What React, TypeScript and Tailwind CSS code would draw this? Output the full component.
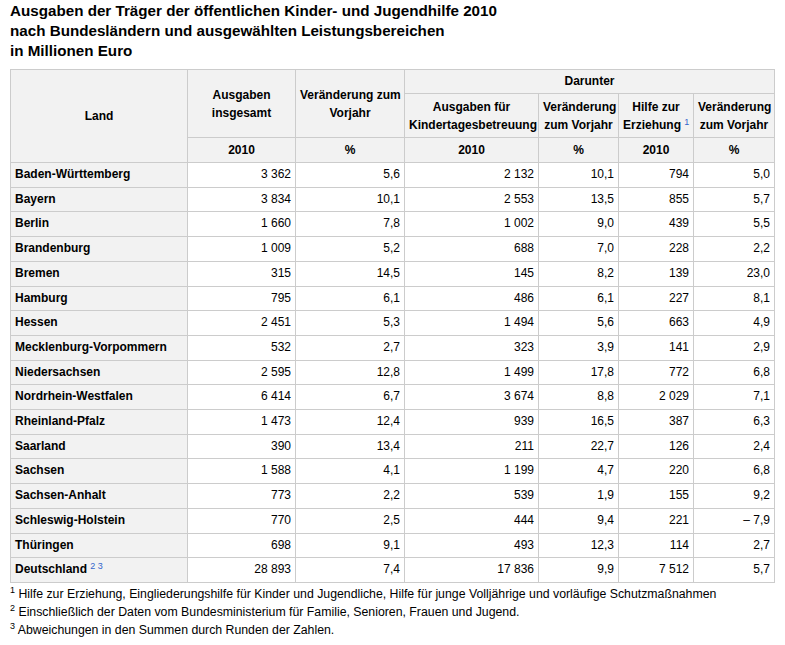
const rows: [string, string, string, string, string, string, string][] = [
  ["Baden-Württemberg", "3 362", "5,6", "2 132", "10,1", "794", "5,0"],
  ["Bayern", "3 834", "10,1", "2 553", "13,5", "855", "5,7"],
  ["Berlin", "1 660", "7,8", "1 002", "9,0", "439", "5,5"],
  ["Brandenburg", "1 009", "5,2", "688", "7,0", "228", "2,2"],
  ["Bremen", "315", "14,5", "145", "8,2", "139", "23,0"],
  ["Hamburg", "795", "6,1", "486", "6,1", "227", "8,1"],
  ["Hessen", "2 451", "5,3", "1 494", "5,6", "663", "4,9"],
  ["Mecklenburg-Vorpommern", "532", "2,7", "323", "3,9", "141", "2,9"],
  ["Niedersachsen", "2 595", "12,8", "1 499", "17,8", "772", "6,8"],
  ["Nordrhein-Westfalen", "6 414", "6,7", "3 674", "8,8", "2 029", "7,1"],
  ["Rheinland-Pfalz", "1 473", "12,4", "939", "16,5", "387", "6,3"],
  ["Saarland", "390", "13,4", "211", "22,7", "126", "2,4"],
  ["Sachsen", "1 588", "4,1", "1 199", "4,7", "220", "6,8"],
  ["Sachsen-Anhalt", "773", "2,2", "539", "1,9", "155", "9,2"],
  ["Schleswig-Holstein", "770", "2,5", "444", "9,4", "221", "– 7,9"],
  ["Thüringen", "698", "9,1", "493", "12,3", "114", "2,7"],
];

const th = "border border-[#cccccc] bg-[#f2f2f2] px-1 font-bold text-center align-middle whitespace-nowrap";
const td = "border border-[#cccccc] bg-white px-1 py-1 leading-[15.7px] text-right";
const land = "border border-[#cccccc] bg-[#f2f2f2] px-1 py-1 leading-[15.7px] font-bold text-left whitespace-nowrap";
const sup = "text-[9px] leading-none font-normal text-[#3366cc]";

export default function App() {
  return (
    <div className="min-h-screen bg-white pl-[10px] pt-px text-black font-['Liberation_Sans',Arial,sans-serif]">
      <h1 className="text-[15.2px] leading-5 font-bold">
        Ausgaben der Träger der öffentlichen Kinder- und Jugendhilfe 2010
        <br />
        nach Bundesländern und ausgewählten Leistungsbereichen
        <br />
        in Millionen Euro
      </h1>

      <table className="mt-[8px] w-[764px] table-fixed border-collapse text-[12px]">
        <colgroup>
          <col className="w-[177px]" />
          <col className="w-[108px]" />
          <col className="w-[109px]" />
          <col className="w-[134px]" />
          <col className="w-[80px]" />
          <col className="w-[75px]" />
          <col className="w-[81px]" />
        </colgroup>
        <thead>
          <tr>
            <th rowSpan={3} className={th}>Land</th>
            <th rowSpan={2} className={`${th} leading-[18px]`}>
              Ausgaben
              <br />
              insgesamt
            </th>
            <th rowSpan={2} className={`${th} leading-[18px]`}>
              Veränderung zum
              <br />
              Vorjahr
            </th>
            <th colSpan={4} className={`${th} py-1 leading-[15px]`}>Darunter</th>
          </tr>
          <tr>
            <th className={`${th} pt-1 pb-[3px] leading-[18px]`}>
              Ausgaben für
              <br />
              Kindertagesbetreuung
            </th>
            <th className={`${th} pt-1 pb-[3px] leading-[18px]`}>
              Veränderung
              <br />
              zum Vorjahr
            </th>
            <th className={`${th} pt-1 pb-[3px] leading-[18px]`}>
              Hilfe zur
              <br />
              Erziehung <sup className={sup}>1</sup>
            </th>
            <th className={`${th} pt-1 pb-[3px] leading-[18px]`}>
              Veränderung
              <br />
              zum Vorjahr
            </th>
          </tr>
          <tr>
            <th className={`${th} py-1 leading-4`}>2010</th>
            <th className={`${th} py-1 leading-4`}>%</th>
            <th className={`${th} py-1 leading-4`}>2010</th>
            <th className={`${th} py-1 leading-4`}>%</th>
            <th className={`${th} py-1 leading-4`}>2010</th>
            <th className={`${th} py-1 leading-4`}>%</th>
          </tr>
        </thead>
        <tbody>
          {rows.map((r) => (
            <tr key={r[0]}>
              <th className={land}>{r[0]}</th>
              {r.slice(1).map((v, i) => (
                <td key={i} className={td}>{v}</td>
              ))}
            </tr>
          ))}
          <tr>
            <th className={land}>
              Deutschland <sup className={sup}>2 3</sup>
            </th>
            <td className={td}>28 893</td>
            <td className={td}>7,4</td>
            <td className={td}>17 836</td>
            <td className={td}>9,9</td>
            <td className={td}>7 512</td>
            <td className={td}>5,7</td>
          </tr>
        </tbody>
      </table>

      <div className="mt-[2px] text-[12.3px] leading-[18px]">
        <p><sup className="text-[9px] leading-none">1</sup> Hilfe zur Erziehung, Eingliederungshilfe für Kinder und Jugendliche, Hilfe für junge Volljährige und vorläufige Schutzmaßnahmen</p>
        <p><sup className="text-[9px] leading-none">2</sup> Einschließlich der Daten vom Bundesministerium für Familie, Senioren, Frauen und Jugend.</p>
        <p><sup className="text-[9px] leading-none">3</sup> Abweichungen in den Summen durch Runden der Zahlen.</p>
      </div>
    </div>
  );
}
